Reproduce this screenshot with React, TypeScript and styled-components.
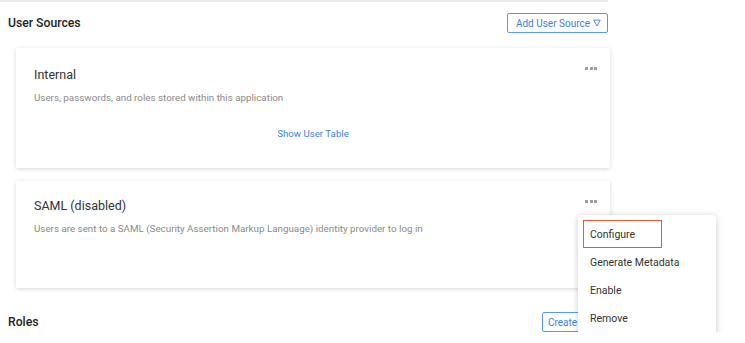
import React, {FC} from 'react';
import styled, {createGlobalStyle} from "styled-components";

const GlobalStyle = createGlobalStyle`
  body {
    margin: 0;
    background: #fff;
    font-family: Roboto, "Liberation Sans", sans-serif;
    color: #333;
  }
`;

const Page = styled.div`
  border-top: 2px solid #ececec;
  padding: 11px 0 0 8px;
  width: 600px;
`;

const SectionHeader = styled.div`
  display: flex;
  justify-content: space-between;
  align-items: center;
  height: 20px;
`;

const SectionTitle = styled.h2`
  margin: 0;
  font-size: 12.2px;
  font-weight: 500;
  color: #222;
`;

const OutlineButton = styled.button`
  height: 20px;
  padding: 0 6px 0 8px;
  background: #fff;
  border: 1px solid #5b9be3;
  border-radius: 2px;
  color: #3f7fd6;
  font-family: inherit;
  font-size: 10px;
  display: flex;
  align-items: center;
  gap: 3px;
`;

const CreateButton = styled(OutlineButton)`
  width: 72px;
  margin-right: -6px;
  padding-left: 5px;
`;

const CardList = styled.div`
  display: flex;
  flex-direction: column;
  gap: 13px;
  margin: 15px 0 0 8px;
  width: 594px;
`;

const Card = styled.div<{ $height: number; $top: number }>`
  position: relative;
  height: ${p => p.$height}px;
  box-sizing: border-box;
  padding: ${p => p.$top}px 18px 0 18px;
  background: #fff;
  border-radius: 2px;
  box-shadow: 0 1px 4px rgba(0, 0, 0, 0.16);
`;

const CardTitle = styled.div`
  font-size: 12.5px;
  line-height: 15px;
  color: #333;
`;

const CardText = styled.div`
  margin-top: 10px;
  font-size: 9.8px;
  line-height: 12px;
  color: #8a8a8a;
`;

const LinkRow = styled.div`
  display: flex;
  justify-content: center;
  margin-top: 24px;
`;

const Link = styled.a`
  font-size: 9.7px;
  color: #3f7fd6;
  cursor: pointer;
`;

const Dots = styled.div`
  position: absolute;
  top: 19px;
  right: 13px;
  display: flex;
  gap: 1.5px;
`;

const Dot = styled.span`
  width: 3px;
  height: 3px;
  background: #9a9a9a;
  border-radius: 0.5px;
`;

const Menu = styled.ul`
  position: absolute;
  top: 34px;
  left: 562px;
  width: 138px;
  margin: 0;
  padding: 5px 0 6px 5px;
  box-sizing: border-box;
  list-style: none;
  background: #fff;
  border-radius: 4px;
  box-shadow: 0 1px 6px rgba(0, 0, 0, 0.22);
  z-index: 2;
`;

const MenuItem = styled.li<{ $active?: boolean }>`
  height: 28px;
  width: 79px;
  box-sizing: border-box;
  display: flex;
  align-items: center;
  padding-left: 6px;
  font-size: 10.5px;
  color: #333;
  white-space: nowrap;
  border: 1px solid ${p => p.$active ? '#d9603f' : 'transparent'};
`;

const RolesHeader = styled(SectionHeader)`
  margin-top: 24px;
`;

const Dotted: FC = () => (
    <Dots><Dot/><Dot/><Dot/></Dots>
);

const App: FC = () => {
    const menuItems = ['Configure', 'Generate Metadata', 'Enable', 'Remove'];

    return (
        <>
            <GlobalStyle/>
            <Page>
                <SectionHeader>
                    <SectionTitle>User Sources</SectionTitle>
                    <OutlineButton>
                        Add User Source
                        <svg width="8" height="8" viewBox="0 0 8 8">
                            <path d="M0.8 1.2 H7.2 L4 7 Z" fill="none" stroke="#3f7fd6" strokeWidth="0.9"/>
                        </svg>
                    </OutlineButton>
                </SectionHeader>
                <CardList>
                    <Card $height={120} $top={19}>
                        <Dotted/>
                        <CardTitle>Internal</CardTitle>
                        <CardText>Users, passwords, and roles stored within this application</CardText>
                        <LinkRow>
                            <Link>Show User Table</Link>
                        </LinkRow>
                    </Card>
                    <Card $height={107} $top={17}>
                        <Dotted/>
                        <CardTitle>SAML (disabled)</CardTitle>
                        <CardText>Users are sent to a SAML (Security Assertion Markup Language) identity provider to log in</CardText>
                        <Menu>
                            {menuItems.map((item, i) => (
                                <MenuItem key={item} $active={i === 0}>{item}</MenuItem>
                            ))}
                        </Menu>
                    </Card>
                </CardList>
                <RolesHeader>
                    <SectionTitle>Roles</SectionTitle>
                    <CreateButton>Create</CreateButton>
                </RolesHeader>
            </Page>
        </>
    );
};

export default App;
